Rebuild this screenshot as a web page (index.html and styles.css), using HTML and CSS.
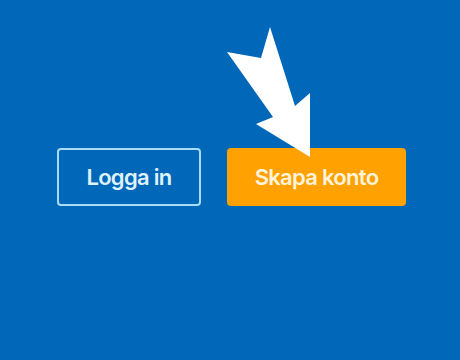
FILE: index.html
```html
<!DOCTYPE html>
<html lang="sv">
<head>
<meta charset="utf-8">
<title>Konto</title>
<link rel="stylesheet" href="styles.css">
</head>
<body>
<main class="stage">
  <div class="actions">
    <a class="btn btn-outline" href="#">Logga in</a>
    <a class="btn btn-primary" href="#">Skapa konto</a>
  </div>
  <svg class="arrow" width="460" height="360" viewBox="0 0 460 360" aria-hidden="true">
    <polygon fill="#ffffff" points="270,27 295,106 310,93 310,157 256,124 273,117 227,52 261,58"/>
  </svg>
</main>
</body>
</html>
```

FILE: styles.css
```css
html, body {
  margin: 0;
  padding: 0;
}
body {
  background: #0067b9;
  width: 460px;
  height: 360px;
  overflow: hidden;
  font-family: Inter, Lato, "Liberation Sans", sans-serif;
}
.stage {
  position: relative;
  width: 460px;
  height: 360px;
}
.actions {
  display: flex;
  gap: 26px;
  padding: 148px 0 0 57px;
}
.btn {
  box-sizing: border-box;
  height: 58px;
  display: flex;
  align-items: center;
  justify-content: center;
  border-radius: 4px;
  text-decoration: none;
  font-size: 22px;
  font-weight: 600;
  letter-spacing: -0.7px;
}
.btn-outline {
  width: 144px;
  border: 2px solid #a8dbf6;
  color: #dff2fc;
}
.btn-primary {
  width: 179px;
  background: #ffa100;
  color: #fff3db;
}
.arrow {
  position: absolute;
  left: 0;
  top: 0;
}
```
